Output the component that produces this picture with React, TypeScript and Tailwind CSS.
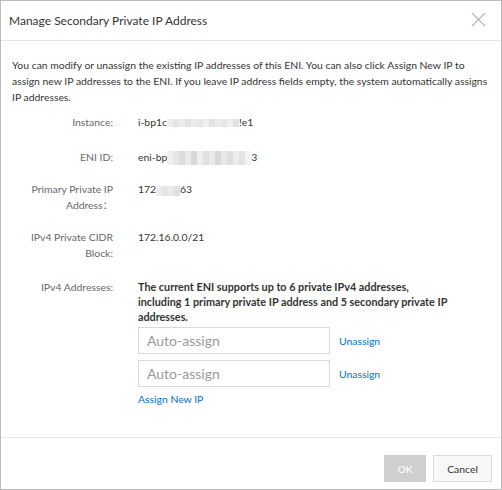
import { ReactNode } from "react";

// mosaic used for masked ids
const Blur = ({ cells, h }: { cells: string[]; h: string }) => (
  <span className={`inline-flex ${h} align-middle`}>
    {cells.map((c, i) => (
      <span key={i} className={`w-[6px] ${c}`} />
    ))}
  </span>
);

const Row = ({ label, children, className = "" }: { label: ReactNode; children: ReactNode; className?: string }) => (
  <div className={`flex ${className}`}>
    <div className="w-[101px] shrink-0 text-right text-[#666]">{label}</div>
    <div className="ml-[25px] text-[#333]">{children}</div>
  </div>
);

export default function App() {
  return (
    <div
      className="w-[502px] h-[490px] bg-white border border-[#bdbdbd] flex flex-col text-[10.4px] leading-[16px] text-[#333]"
      style={{ fontFamily: '"Lato", "Noto Sans CJK SC", sans-serif' }}
    >
      {/* Header */}
      <div className="h-[40px] shrink-0 border-b border-[#e5e5e5] flex items-center justify-between pl-[8px] pr-[15px]">
        <h3 className="text-[12px] text-[#333]">Manage Secondary Private IP Address</h3>
        <svg width="15" height="15" viewBox="0 0 15 15" className="-mt-[2px]">
          <path d="M1 1L14 14M14 1L1 14" stroke="#bbb" strokeWidth="1.4" />
        </svg>
      </div>

      {/* Body */}
      <div className="flex-1 pt-[16px] px-[11px]">
        <p className="mb-[9px]">
          You can modify or unassign the existing IP addresses of this ENI. You can also click Assign New IP to
          <br />
          assign new IP addresses to the ENI. If you leave IP address fields empty, the system automatically assigns
          <br />
          IP addresses.
        </p>

        <Row label="Instance:" className="mb-[19px]">
          i-bp1c
          <Blur h="h-[8px]" cells={["bg-[#eee]", "bg-[#e4e4e4]", "bg-[#ececec]", "bg-[#e2e2e2]", "bg-[#eaeaea]", "bg-[#e6e6e6]", "bg-[#efefef]", "bg-[#e3e3e3]", "bg-[#ebebeb]", "bg-[#e5e5e5]", "bg-[#f0f0f0]", "bg-[#e1e1e1]"]} />
          !e1
        </Row>
        <Row label="ENI ID:" className="mb-[16px]">
          eni-bp
          <Blur h="h-[14px]" cells={["bg-[#f0f0f0]", "bg-[#e6e6e6]", "bg-[#dcdcdc]", "bg-[#ebebeb]", "bg-[#d8d8d8]", "bg-[#eeeeee]", "bg-[#e0e0e0]", "bg-[#eaeaea]", "bg-[#d9d9d9]", "bg-[#e8e8e8]", "bg-[#dedede]", "bg-[#ececec]", "bg-[#e3e3e3]", "bg-[#f2f2f2]"]} />
          3
        </Row>
        <Row label={<>Primary Private IP<br />Address：</>} className="mb-[16px]">
          172
          <Blur h="h-[10px]" cells={["bg-[#ededed]", "bg-[#e4e4e4]", "bg-[#eaeaea]", "bg-[#e0e0e0]"]} />
          63
        </Row>
        <Row label={<>IPv4 Private CIDR<br />Block:</>} className="mb-[18px]">
          172.16.0.0/21
        </Row>
        <Row label="IPv4 Addresses:">
          <p className="font-bold text-[10.8px] leading-[15px] text-[#333]">
            The current ENI supports up to 6 private IPv4 addresses,
            <br />
            including 1 primary private IP address and 5 secondary private IP
            <br />
            addresses.
          </p>
          <div className="mt-[3px] flex flex-col gap-[6px]">
            {[0, 1].map((i) => (
              <div key={i} className="flex items-center">
                <input
                  placeholder="Auto-assign"
                  className="w-[192px] h-[27px] border border-[#d9d9d9] px-[8px] text-[14px] text-[#333] placeholder:text-[#999] outline-none"
                  style={{ fontFamily: '"Lato", sans-serif' }}
                />
                <a className="ml-[9px] text-[#0070cc] cursor-pointer">Unassign</a>
              </div>
            ))}
          </div>
          <a className="block mt-[4px] text-[#0070cc] cursor-pointer">Assign New IP</a>
        </Row>
      </div>

      {/* Footer */}
      <div className="h-[52px] shrink-0 border-t border-[#e5e5e5] flex justify-end gap-[7px] pt-[17px] pr-[9px]">
        <button className="w-[42px] h-[27px] bg-[#cfcfcf] text-white">OK</button>
        <button className="w-[59px] h-[27px] bg-[#f7f7f7] border border-[#dcdcdc] text-[#333]">Cancel</button>
      </div>
    </div>
  );
}
